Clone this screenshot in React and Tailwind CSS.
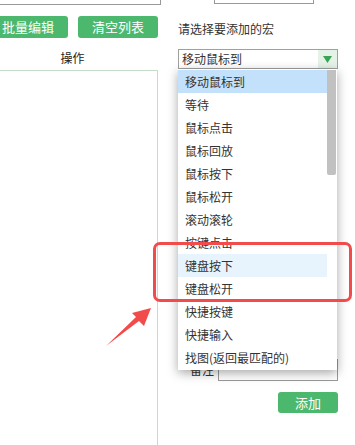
import React from 'react';

const items = [
  '移动鼠标到',
  '等待',
  '鼠标点击',
  '鼠标回放',
  '鼠标按下',
  '鼠标松开',
  '滚动滚轮',
  '按键点击',
  '键盘按下',
  '键盘松开',
  '快捷按键',
  '快捷输入',
  '找图(返回最匹配的)',
];

export default function App() {
  return (
    <div
      className="relative w-[355px] h-[445px] overflow-hidden bg-white text-[#333]"
      style={{ fontFamily: '"Noto Sans CJK SC", "Noto Sans", sans-serif' }}
    >
      <div className="flex h-full gap-[20px]">
        {/* 左侧 */}
        <div className="ml-[-13px] w-[171px] flex flex-col shrink-0">
          <div className="h-[5px] w-[174px] border-r border-b border-[#999]" />
          <div className="mt-[11px] ml-[1px] flex gap-[10px]">
            <button className="w-[80px] h-[22px] rounded-[3px] bg-[#4cb86e] text-white text-[13px] leading-[22px]">
              批量编辑
            </button>
            <button className="w-[80px] h-[22px] rounded-[3px] bg-[#4cb86e] text-white text-[13px] leading-[22px]">
              清空列表
            </button>
          </div>
          <div className="mt-[13px] text-center text-[12px] leading-[14px] text-[#222]">操作</div>
          <div className="mt-[5px] flex-1 border-t border-r border-[#c5dcc9]" />
        </div>

        {/* 右侧 */}
        <div className="w-[160px] flex flex-col shrink-0">
          <div className="ml-[36px] w-[100px] h-[4px] border-x border-b border-[#999]" />
          <div className="mt-[18px] text-[12px] leading-[14px]">请选择要添加的宏</div>
          <div className="mt-[13px] w-[160px] h-[20px] flex border border-[#a0a0a0]">
            <div className="flex-1 pl-[3px] text-[12px] leading-[18px]">移动鼠标到</div>
            <div className="w-[19px] bg-[#e4f2e7] flex items-center justify-center">
              <svg width="9" height="7" viewBox="0 0 9 7">
                <polygon points="0,0 9,0 4.5,7" fill="#3aa356" />
              </svg>
            </div>
          </div>
          <div className="mt-[290px] flex items-center">
            <span className="ml-[12px] w-[28px] text-[12px] leading-[14px]">备注</span>
            <div className="w-[120px] h-[22px] border border-[#999]" />
          </div>
          <button className="mt-[11px] self-end w-[60px] h-[21px] rounded-[3px] bg-[#4cb86e] text-white text-[13px] leading-[21px]">
            添加
          </button>
        </div>
      </div>

      {/* 下拉列表 */}
      <div className="absolute left-[178px] top-[69px] w-[159px] h-[301px] bg-white py-[1px] shadow-[0_3px_10px_rgba(0,0,0,0.35)]">
        <div className="w-[149px]">
          {items.map((t, i) => (
            <div
              key={t}
              className={
                'h-[23px] pl-[7px] text-[12px] leading-[23px] ' +
                (i === 0 ? 'bg-[#c4e1fb]' : i === 8 ? 'bg-[#e8f4fd]' : '')
              }
            >
              {t}
            </div>
          ))}
        </div>
        <div className="absolute right-[1px] top-[1px] w-[9px] h-[105px] bg-[#c1c1c1] rounded-b-[2px]" />
      </div>

      {/* 标注 */}
      <div className="absolute left-[153px] top-[242px] w-[199px] h-[60px] border-[3px] border-[#f24b4b] rounded-[7px]" />
      <svg className="absolute left-0 top-0" width="355" height="445" viewBox="0 0 355 445">
        <polygon
          points="106,346 136,317 132,313 151,308 144,326 139,321"
          fill="#f24b4b"
        />
      </svg>
    </div>
  );
}
